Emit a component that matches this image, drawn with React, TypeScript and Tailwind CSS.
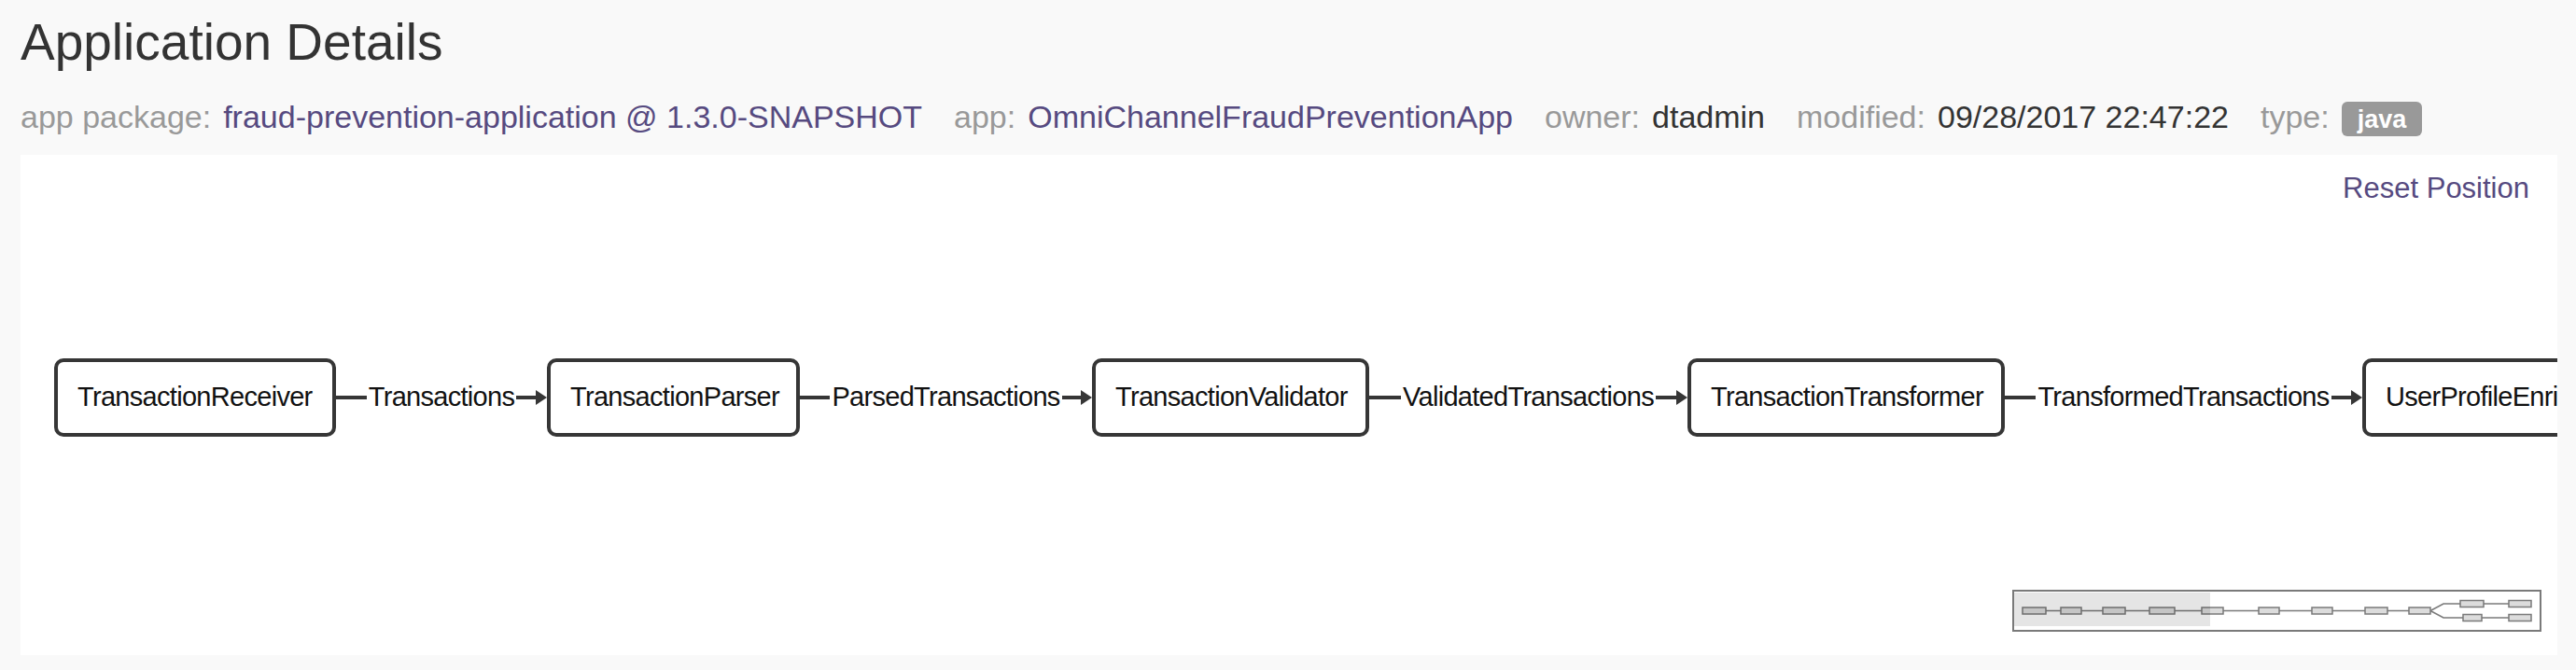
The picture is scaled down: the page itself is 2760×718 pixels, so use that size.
import React from "react";

type Node = { name: string; width: number };
type Edge = { label: string; width: number };

const nodes: Node[] = [
  { name: "TransactionReceiver", width: 302 },
  { name: "TransactionParser", width: 271 },
  { name: "TransactionValidator", width: 297 },
  { name: "TransactionTransformer", width: 340 },
  { name: "UserProfileEnricher", width: 310 },
];

const edges: Edge[] = [
  { label: "Transactions", width: 226 },
  { label: "ParsedTransactions", width: 313 },
  { label: "ValidatedTransactions", width: 341 },
  { label: "TransformedTransactions", width: 383 },
];

const font = { fontFamily: '"Liberation Sans", Arial, sans-serif' };

function GraphNode({ node }: { node: Node }) {
  return (
    <div
      className="flex h-[84px] shrink-0 items-center justify-start rounded-[10px] border-[4px] border-[#363636] bg-white pl-[21px] text-[29px] tracking-[-0.7px] text-[#111]"
      style={{ width: node.width }}
    >
      {node.name}
    </div>
  );
}

function GraphEdge({ edge }: { edge: Edge }) {
  return (
    <div className="flex shrink-0 items-center" style={{ width: edge.width }}>
      <div className="h-[4px] flex-1 bg-[#363636]" />
      <span className="px-[2px] text-[29px] tracking-[-0.7px] text-[#111]">{edge.label}</span>
      <div className="flex flex-1 items-center">
        <div className="h-[4px] flex-1 bg-[#363636]" />
        <svg width="12" height="16" viewBox="0 0 12 16" className="shrink-0">
          <path d="M0 0 L12 8 L0 16 Z" fill="#363636" />
        </svg>
      </div>
    </div>
  );
}

const mainNodes: [number, number][] = [
  [11, 25], [52, 22], [97, 24], [147, 27], [203, 23], [264, 22], [321, 22], [378, 24], [425, 23],
];

function MiniMap() {
  return (
    <svg width="567" height="45" viewBox="0 0 567 45">
      <rect x="1" y="1" width="565" height="43" fill="white" stroke="#7a7a7a" strokeWidth="2" />
      <line x1="11" y1="22.5" x2="448" y2="22.5" stroke="#7a7a7a" strokeWidth="1.5" />
      <polyline points="448,22.5 462,15 480,15" fill="none" stroke="#7a7a7a" strokeWidth="1.5" />
      <polyline points="448,22.5 462,30 483,30" fill="none" stroke="#7a7a7a" strokeWidth="1.5" />
      <line x1="505" y1="15" x2="532" y2="15" stroke="#7a7a7a" strokeWidth="1.5" />
      <line x1="503" y1="30" x2="532" y2="30" stroke="#7a7a7a" strokeWidth="1.5" />
      {mainNodes.map(([x, w]) => (
        <rect key={x} x={x} y="19" width={w} height="7" fill="#dcdcdc" stroke="#7a7a7a" strokeWidth="1.5" />
      ))}
      <rect x="480" y="11.5" width="25" height="7" fill="#dcdcdc" stroke="#7a7a7a" strokeWidth="1.5" />
      <rect x="532" y="11.5" width="24" height="7" fill="#dcdcdc" stroke="#7a7a7a" strokeWidth="1.5" />
      <rect x="483" y="26.5" width="20" height="7" fill="#dcdcdc" stroke="#7a7a7a" strokeWidth="1.5" />
      <rect x="532" y="26.5" width="24" height="7" fill="#dcdcdc" stroke="#7a7a7a" strokeWidth="1.5" />
      <rect x="2" y="3" width="210" height="36" fill="black" fillOpacity="0.1" />
    </svg>
  );
}

function Meta({ label, children, last }: { label: string; children: React.ReactNode; last?: boolean }) {
  return (
    <span className={last ? "flex items-center" : "mr-[34px] flex items-center"}>
      <span className="mr-[13px] text-[#999]">{label}</span>
      {children}
    </span>
  );
}

export default function App() {
  return (
    <div className="h-[718px] w-[2760px] overflow-hidden bg-[#f9f9f9] pt-[15px]" style={font}>
      <h1 className="ml-[22px] text-[55px] leading-[60px] text-[#333]">Application Details</h1>

      <div className="ml-[22px] mt-[30px] flex h-[40px] items-center whitespace-nowrap text-[34px] leading-[40px]">
        <Meta label="app package:">
          <span className="text-[#564a80]">fraud-prevention-application @ 1.3.0-SNAPSHOT</span>
        </Meta>
        <Meta label="app:">
          <span className="text-[#564a80]">OmniChannelFraudPreventionApp</span>
        </Meta>
        <Meta label="owner:">
          <span className="text-[#333]">dtadmin</span>
        </Meta>
        <Meta label="modified:">
          <span className="text-[#333]">09/28/2017 22:47:22</span>
        </Meta>
        <Meta label="type:" last>
          <span className="mt-[5px] flex h-[37px] items-center rounded-[6px] bg-[#999] px-[17px] text-[27px] font-bold text-white">
            java
          </span>
        </Meta>
      </div>

      <div className="relative ml-[22px] mt-[21px] h-[536px] w-[2718px] overflow-hidden bg-white">
        <div className="flex justify-end pr-[30px] pt-[18px]">
          <span className="text-[31px] leading-[36px] text-[#564a80]">Reset Position</span>
        </div>

        <div className="mt-[164px] flex flex-nowrap items-center pl-[36px]">
          {nodes.map((n, i) => (
            <React.Fragment key={n.name}>
              <GraphNode node={n} />
              {edges[i] ? <GraphEdge edge={edges[i]} /> : null}
            </React.Fragment>
          ))}
        </div>

        <div className="absolute bottom-[25px] right-[17px]">
          <MiniMap />
        </div>
      </div>
    </div>
  );
}
